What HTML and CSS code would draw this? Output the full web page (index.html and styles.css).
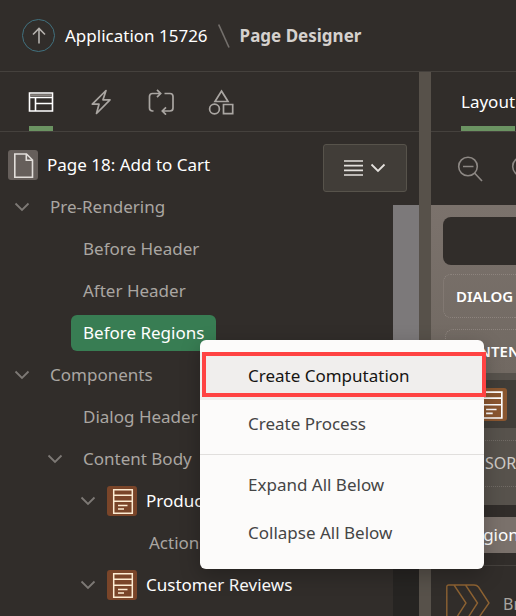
FILE: index.html
```
<!DOCTYPE html>
<html lang="en">
<head>
<meta charset="utf-8">
<title>Page Designer</title>
<link rel="stylesheet" href="styles.css">
</head>
<body>
<svg class="defs" aria-hidden="true">
  <symbol id="chevron" viewBox="0 0 16 10"><path d="M1.5 1.5 8 8l6.5-6.5" fill="none" stroke="currentColor" stroke-width="1.8"/></symbol>
  <symbol id="region" viewBox="0 0 30 30"><path d="M6.700 3.700h18.600v23.600H6.700zM7 9.200h18M7 15.200h18M11 19.500h9.500M11 23h6" fill="none" stroke="currentColor" stroke-width="1.500"/></symbol>
</svg>
<div class="app">
  <header class="header">
    <a class="up" href="#" aria-label="Up"><svg width="18" height="20" viewBox="0 0 18 20"><path d="M9 17.500V3M3 8.500l6-6 6 6" fill="none" stroke="currentColor" stroke-width="1.600"/></svg></a>
    <a class="crumb" href="#">Application 15726</a>
    <svg class="slash" width="12" height="24" viewBox="0 0 12 24"><path d="M.7.500 11 23.500" stroke="currentColor" stroke-width="1.600"/></svg>
    <h1 class="current">Page Designer</h1>
  </header>
  <main class="panes">
    <section class="left">
      <nav class="tabs">
        <button class="tab tab-active" aria-label="Rendering"><svg width="26" height="26" viewBox="0 0 26 26"><path d="M1.500 4h23v18h-23zM1.500 8.500h23M7.500 9v13M7.500 14.500h17" fill="none" stroke="currentColor" stroke-width="1.600"/><path d="M2 6.200h22" stroke="#8b8581" stroke-width="2"/></svg></button>
        <button class="tab" aria-label="Dynamic Actions"><svg width="26" height="26" viewBox="0 0 26 26"><path d="M18 1.500 4.300 15.200h6.700L8.500 24.500 22 10.800h-7z" fill="none" stroke="currentColor" stroke-width="1.700" stroke-linejoin="round"/></svg></button>
        <button class="tab" aria-label="Processing"><svg width="26" height="26" viewBox="0 0 26 26"><path d="M5.500 22H4.500q-3 0-3-3V7.500q0-3 3-3h8M9 .800l3.700 3.700L9 8.200M16.500 4.500h5.500q3 0 3 3V19q0 3-3 3h-7.500M18 18.300 14.300 22l3.700 3.700" fill="none" stroke="currentColor" stroke-width="1.700"/></svg></button>
        <button class="tab" aria-label="Shared Components"><svg width="26" height="26" viewBox="0 0 26 26"><path d="M13.500 2 20 12.500H7zM15.500 15.500h9.200v9.200h-9.200z" fill="none" stroke="currentColor" stroke-width="1.700"/><circle cx="6.500" cy="20" r="4.900" fill="none" stroke="currentColor" stroke-width="1.700"/></svg></button>
      </nav>
      <div class="tree-pane">
        <div class="tree">
          <div class="page-row"><span class="badge badge-page"><svg width="30" height="30" viewBox="0 0 30 30"><path d="M6.800 4h11.700l6 6v17.300H6.800zM18.300 4v6.200h6.200" fill="none" stroke="currentColor" stroke-width="1.600"/></svg></span><span>Page 18: Add to Cart</span></div>
          <ul>
            <li><div class="row"><button class="toggle" aria-label="Collapse"><svg><use href="#chevron"/></svg></button><span class="label">Pre-Rendering</span></div>
              <ul>
                <li><div class="row leaf"><span class="label">Before Header</span></div></li>
                <li><div class="row leaf"><span class="label">After Header</span></div></li>
                <li><div class="row leaf"><span class="label selected">Before Regions</span></div></li>
              </ul>
            </li>
            <li><div class="row"><button class="toggle" aria-label="Collapse"><svg><use href="#chevron"/></svg></button><span class="label">Components</span></div>
              <ul>
                <li><div class="row leaf"><span class="label">Dialog Header</span></div></li>
                <li><div class="row"><button class="toggle" aria-label="Collapse"><svg><use href="#chevron"/></svg></button><span class="label">Content Body</span></div>
                  <ul>
                    <li><div class="row"><button class="toggle" aria-label="Collapse"><svg><use href="#chevron"/></svg></button><span class="label region"><span class="badge"><svg><use href="#region"/></svg></span>Product</span></div>
                      <ul><li><div class="row leaf"><span class="label">Actions</span></div></li></ul>
                    </li>
                    <li><div class="row"><button class="toggle" aria-label="Collapse"><svg><use href="#chevron"/></svg></button><span class="label region"><span class="badge"><svg><use href="#region"/></svg></span>Customer Reviews</span></div></li>
                  </ul>
                </li>
              </ul>
            </li>
          </ul>
        </div>
        <div class="tree-side">
          <button class="menu-button" aria-label="Tree options"><svg width="20" height="18" viewBox="0 0 20 18"><path d="M0 2h19M0 6.700h19M0 11.300h19M0 16h19" stroke="currentColor" stroke-width="1.700"/></svg><svg class="caret"><use href="#chevron"/></svg></button>
          <div class="scrollbar"><div class="thumb"></div></div>
        </div>
      </div>
    </section>
    <div class="splitter"></div>
    <section class="right">
      <nav class="layout-tabs"><button class="layout-tab">Layout</button></nav>
      <div class="tools">
        <button class="tool" aria-label="Zoom out"><svg width="26" height="26" viewBox="0 0 26 26"><circle cx="11" cy="10.500" r="9.300" fill="none" stroke="currentColor" stroke-width="1.600"/><path d="M6 10.500h10.500M17.500 17l7.500 8" stroke="currentColor" stroke-width="1.700"/></svg></button>
        <button class="tool" aria-label="Zoom in"><svg width="26" height="26" viewBox="0 0 26 26"><circle cx="11" cy="10.500" r="9.300" fill="none" stroke="currentColor" stroke-width="1.600"/><path d="M6 10.500h10.500M11 5.500v10M17.500 17l7.500 8" stroke="currentColor" stroke-width="1.700"/></svg></button>
      </div>
      <div class="canvas">
        <div class="page-block"></div>
        <div class="slot">DIALOG HEADER</div>
        <div class="slot slot-body">CONTENT BODY</div>
      </div>
      <div class="region-card">
        <div class="region-title"><span class="badge badge-large"><svg><use href="#region"/></svg></span>Product</div>
        <div class="sort">SORT ORDER</div>
      </div>
      <div class="gallery-tabs"><button class="gallery-tab">Regions</button></div>
      <div class="gallery">
        <svg width="44" height="40" viewBox="0 0 44 40"><path d="M.800 39V3q0-2 2-2H28q3 0 4.500 2L43 19 29 39M8 1l12 18L7 39M19.500 1l12 18-13 20" fill="none" stroke="currentColor" stroke-width="1.400"/></svg>
        <span>Breadcrumb</span>
      </div>
    </section>
  </main>
  <div class="menu" role="menu">
    <button class="item item-focus" role="menuitem">Create Computation</button>
    <button class="item" role="menuitem">Create Process</button>
    <hr>
    <button class="item" role="menuitem">Expand All Below</button>
    <button class="item" role="menuitem">Collapse All Below</button>
    <div class="highlight"></div>
  </div>
</div>
</body>
</html>
```
FILE: styles.css
```
* { box-sizing: border-box; }
body {
  margin: 0;
  background: #312d2a;
  color: #fff;
  font: 17px/24px "Noto Sans", "Open Sans", sans-serif;
}
button {
  border: 0;
  padding: 0;
  background: none;
  color: inherit;
  font: inherit;
}
ul { list-style: none; margin: 0; padding: 0; }
svg { display: block; flex: none; }
.defs { position: absolute; width: 0; height: 0; }
.app {
  position: relative;
  display: flex;
  flex-direction: column;
  height: 100vh;
  overflow: hidden;
  white-space: nowrap;
}

.header {
  flex: none;
  display: flex;
  align-items: center;
  height: 72px;
  padding-left: 22px;
  border-bottom: 1px solid #45413d;
}
.up {
  display: flex;
  align-items: center;
  justify-content: center;
  width: 33px;
  height: 33px;
  margin-right: 10px;
  border: 1px solid #41717f;
  border-radius: 50%;
  color: #b5b1ad;
}
.crumb { color: #fff; text-decoration: none; }
.slash { margin: 0 10px; color: #74706c; }
.current { margin: 0; font-size: 17px; font-weight: 700; color: #d5d1ce; }

.panes { flex: 1; display: flex; min-height: 0; }
.left { flex: none; display: flex; flex-direction: column; width: 419px; }
.splitter { flex: none; width: 12px; background: #57514a; }
.right { flex: 1; min-width: 0; display: flex; flex-direction: column; overflow: hidden; }

.tabs, .layout-tabs {
  flex: none;
  display: flex;
  height: 60px;
  border-bottom: 1px solid #45413d;
}
.tabs { gap: 36px; padding-left: 29px; color: #aaa6a2; }
.tab {
  display: flex;
  align-items: center;
  justify-content: center;
  width: 24px;
  padding-top: 5px;
  border-bottom: 5px solid transparent;
}
.tab-active { color: #fff; border-color: #6b9362; }
.layout-tabs { padding-left: 30px; }
.layout-tab { padding-top: 5px; border-bottom: 5px solid #6b9362; }

.tree-pane { flex: 1; display: flex; min-height: 0; }
.tree { flex: 1; min-width: 0; padding: 12px 0 0 8px; color: #aaa6a2; }
.page-row { display: flex; align-items: center; gap: 9px; height: 42px; color: #fff; }
.row { display: flex; align-items: center; height: 42px; }
.row.leaf { padding-left: 30px; }
li > ul { padding-left: 33px; }
.toggle {
  display: flex;
  align-items: center;
  justify-content: center;
  width: 28px;
  height: 30px;
  margin-right: 2px;
  color: #7d7975;
}
.toggle svg, .caret { width: 16px; height: 10px; }
.label { display: flex; align-items: center; height: 36px; padding: 0 12px; border-radius: 6px; }
.selected { background: #387d53; color: #fff; }
.region { gap: 9px; padding-left: 3px; color: #fff; }
.badge { flex: none; width: 30px; height: 30px; border-radius: 3px; background: #7a4529; color: #fdecd2; }
.badge svg { width: 100%; height: 100%; }
.badge-page { background: #665f5b; color: #e2deda; }

.tree-side { display: flex; flex-direction: column; width: 96px; padding-top: 12px; }
.menu-button {
  display: flex;
  align-items: center;
  justify-content: center;
  gap: 6px;
  width: 84px;
  height: 48px;
  margin-bottom: 13px;
  border: 1px solid #57534b;
  border-radius: 3px;
  background: #413d38;
  color: #e4e1dd;
}
.scrollbar { flex: 1; align-self: flex-end; width: 26px; background: #262422; }
.thumb { height: 75%; background: #7c797a; }

.tools { flex: none; display: flex; gap: 28px; height: 73px; padding-left: 26px; color: #8d8884; }
.canvas {
  flex: none;
  padding: 12px 0 0 12px;
  background: linear-gradient(#7b726c, #716962);
}
.page-block { height: 48px; margin-bottom: 9px; border-radius: 8px 0 0 8px; background: #312d2a; }
.slot {
  height: 44px;
  padding-left: 12px;
  border: 1px dotted #8d847e;
  border-right: 0;
  border-radius: 8px 0 0 8px;
  font-size: 15px;
  font-weight: 600;
  line-height: 42px;
}
.slot-body { margin: 11px 0 0 2px; border-bottom: 0; border-bottom-left-radius: 0; }
.region-card { flex: none; padding: 7px 0 18px; background: #57524c; }
.region-title {
  display: flex;
  align-items: center;
  gap: 8px;
  height: 48px;
  padding-left: 43px;
  background: #413d38;
}
.badge-large { width: 33px; height: 33px; background: #8b5730; color: #fff; }
.sort {
  height: 47px;
  margin-top: 12px;
  padding-left: 54px;
  border: 1px dotted #716b65;
  border-width: 1px 0;
  color: #cfcac6;
  font-size: 16px;
  line-height: 45px;
}
.gallery-tabs { flex: none; padding: 12px 0; border-bottom: 1px solid #45413d; }
.gallery-tab { width: 100%; height: 36px; padding-left: 32px; background: #7a716b; text-align: left; }
.gallery {
  flex: none;
  display: flex;
  align-items: center;
  gap: 13px;
  padding: 18px 0 0 15px;
  color: #a8a4a0;
  font-size: 16px;
}
.gallery svg { color: #8d6232; }

.menu {
  position: absolute;
  left: 200px;
  top: 340px;
  width: 284px;
  padding: 12px 0;
  border-radius: 6px;
  background: #fcfbfa;
  box-shadow: 0 6px 20px rgba(0, 0, 0, .25);
  color: #454545;
}
.item { display: block; width: 100%; height: 48px; padding: 0 48px; text-align: left; }
.item-focus { background: #f0eeed; color: #161513; }
.menu hr { margin: 6px 0; border: 0; border-top: 1px solid #e1dfdd; }
.highlight {
  position: absolute;
  left: 2px;
  top: 12px;
  width: 100%;
  height: 45px;
  border: 4px solid #ff4343;
}
```
